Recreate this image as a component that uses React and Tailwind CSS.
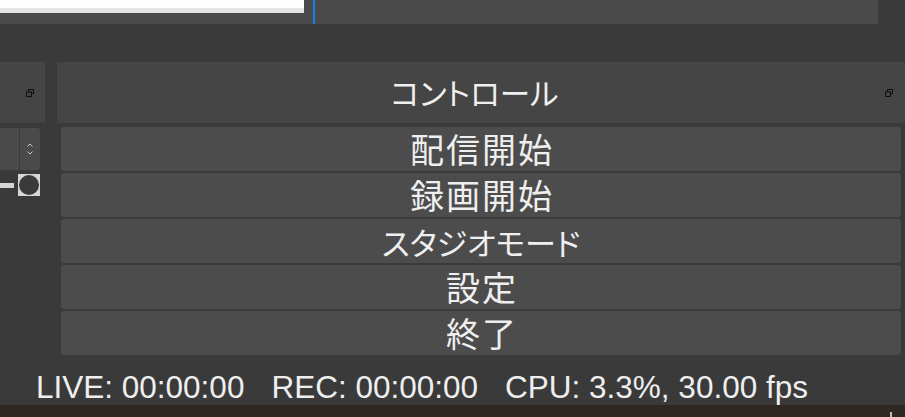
import React from 'react';

const jp = { fontFamily: '"Noto Sans CJK JP", "Noto Sans", sans-serif' };

function FloatIcon() {
  return (
    <svg width="8" height="8" viewBox="0 0 8 8" className="block">
      <rect x="2.5" y="0.5" width="5" height="4" fill="none" stroke="#111" strokeWidth="1" />
      <rect x="0.5" y="3" width="5" height="4.5" fill="#444" stroke="#111" strokeWidth="1" />
    </svg>
  );
}

const buttons = [
  { label: '配信開始', kana: false },
  { label: '録画開始', kana: false },
  { label: 'スタジオモード', kana: true },
  { label: '設定', kana: false },
  { label: '終了', kana: false },
];

export default function App() {
  return (
    <div className="w-[905px] h-[417px] bg-[#3a3a3a] flex flex-col overflow-hidden select-none">
      {/* top strip: preview + scenes */}
      <div className="h-[24px] flex">
        <div className="w-[878px] h-full bg-[#4a4a4a] flex">
          <div className="w-[304px] h-[13px] bg-[#fdfdfd] border-b-[5px] border-[#e4e4e4]" />
          <div className="ml-[9px] w-[2px] h-full bg-[#1a7df0]" />
        </div>
      </div>

      <div className="h-[38px]" />

      {/* dock titles */}
      <div className="h-[61px] flex">
        <div className="w-[45px] h-full bg-[#454545] flex items-center justify-end pr-[11px]">
          <FloatIcon />
        </div>
        <div className="w-[12px]" />
        <div className="flex-1 h-full bg-[#454545] relative flex items-center justify-center pr-[13px]">
          <span
            className="text-[30.5px] text-[#efefef] leading-none [font-feature-settings:'palt']"
            style={jp}
          >
            コントロール
          </span>
          <div className="absolute right-[12px] top-[27px]">
            <FloatIcon />
          </div>
        </div>
      </div>

      {/* content */}
      <div className="flex pt-[4px]">
        <div className="w-[40px] flex flex-col">
          <div className="h-[42px] mt-[1px] bg-[#4a4a4a] rounded-r-[3px] flex">
            <div className="w-[20px] h-full border-r border-[#3a3a3a]" />
            <div className="flex-1 flex items-center justify-center">
              <svg width="8" height="14" viewBox="0 0 8 14">
                <path d="M1.5 4.5 L4 2 L6.5 4.5" fill="none" stroke="#c8c8c8" strokeWidth="1" />
                <path d="M1.5 9.5 L4 12 L6.5 9.5" fill="none" stroke="#c8c8c8" strokeWidth="1" />
              </svg>
            </div>
          </div>
          <div className="h-[22px] mt-[4px] flex items-center">
            <div className="w-[14px] h-[5px] bg-[#d6d6d6]" />
            <div className="ml-[4px] w-[22px] h-[22px] bg-[#d6d6d6] flex items-center justify-center">
              <div className="w-[20px] h-[20px] rounded-full bg-[#3a3a3a]" />
            </div>
          </div>
        </div>
        <div className="ml-[21px] w-[840px] flex flex-col gap-[2px]">
          {buttons.map((b) => (
            <div
              key={b.label}
              className="h-[44px] rounded-[3px] bg-[#4c4c4c] flex items-center justify-center"
            >
              {b.kana ? (
                <span
                  className="text-[31px] text-[#efefef] leading-none [font-feature-settings:'palt']"
                  style={jp}
                >
                  {b.label}
                </span>
              ) : (
                <span
                  className="text-[34px] text-[#efefef] leading-none tracking-[2px] -mr-[2px]"
                  style={jp}
                >
                  {b.label}
                </span>
              )}
            </div>
          ))}
        </div>
      </div>

      {/* status bar */}
      <div
        className="h-[50px] flex items-center pl-[36px] gap-[27px] text-[31.5px] text-[#efefef] pt-[16px]"
        style={{ fontFamily: '"Liberation Sans", Arial, sans-serif' }}
      >
        <span>LIVE: 00:00:00</span>
        <span>REC: 00:00:00</span>
        <span>CPU: 3.3%, 30.00 fps</span>
      </div>

      <div className="flex-1 bg-[#2e2822] flex justify-end pr-[13px]">
        <div className="w-[2px] h-full mt-[7px] bg-[#bdbdbd]" />
      </div>
    </div>
  );
}
